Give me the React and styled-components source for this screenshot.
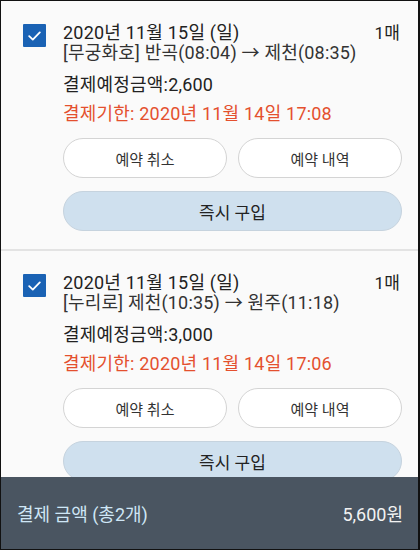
import styled, { createGlobalStyle } from "styled-components";

const GlobalStyle = createGlobalStyle`
  html, body {
    margin: 0;
    padding: 0;
    background: #fafafa;
  }
  body {
    font-family: Roboto, "Noto Sans CJK KR", sans-serif;
    color: #222;
  }
`;

const tickets = [
  {
    id: 1,
    date: "2020년 11월 15일 (일)",
    count: "1매",
    train: "무궁화호",
    from: "반곡(08:04)",
    to: "제천(08:35)",
    price: "2,600",
    deadline: "2020년 11월 14일 17:08",
  },
  {
    id: 2,
    date: "2020년 11월 15일 (일)",
    count: "1매",
    train: "누리로",
    from: "제천(10:35)",
    to: "원주(11:18)",
    price: "3,000",
    deadline: "2020년 11월 14일 17:06",
  },
];

const CheckIcon = () => (
  <svg width="13" height="10" viewBox="0 0 13 10">
    <path
      d="M1.2 5.2 L4.8 8.6 L11.8 1.4"
      fill="none"
      stroke="#fff"
      strokeWidth="1.8"
      strokeLinecap="round"
      strokeLinejoin="round"
    />
  </svg>
);

const TicketCard = ({ ticket }) => (
  <Card>
    <Check>
      <CheckIcon />
    </Check>
    <Body>
      <TitleRow>
        <span>{ticket.date}</span>
        <Count>{ticket.count}</Count>
      </TitleRow>
      <Route>
        [{ticket.train}] {ticket.from} → {ticket.to}
      </Route>
      <Price>결제예정금액:{ticket.price}</Price>
      <Deadline>결제기한: {ticket.deadline}</Deadline>
      <ButtonRow>
        <PillButton>예약 취소</PillButton>
        <PillButton>예약 내역</PillButton>
      </ButtonRow>
      <BuyButton>즉시 구입</BuyButton>
    </Body>
  </Card>
);

const App = () => (
  <Frame>
    <GlobalStyle />
    <List>
      {tickets.map((t) => (
        <TicketCard key={t.id} ticket={t} />
      ))}
    </List>
    <TotalBar>
      <TotalLabel>결제 금액 (총2개)</TotalLabel>
      <TotalAmount>5,600원</TotalAmount>
    </TotalBar>
  </Frame>
);

export default App;

const Frame = styled.div`
  position: relative;
  width: 420px;
  height: 550px;
  box-sizing: border-box;
  border: 1px solid #111;
  border-right-width: 2px;
  overflow: hidden;
  background: #fafafa;
`;

const List = styled.div`
  display: flex;
  flex-direction: column;
`;

const Card = styled.div`
  display: flex;
  gap: 17px;
  padding: 22px 16px 18px 22px;
  border-bottom: 2px solid #e3e3e3;
`;

const Check = styled.div`
  flex: none;
  display: flex;
  align-items: center;
  justify-content: center;
  width: 23px;
  height: 23px;
  margin-top: 1px;
  background: #1a62b4;
  border-radius: 1px;
`;

const Body = styled.div`
  flex: 1;
  display: flex;
  flex-direction: column;
  font-size: 18px;
  letter-spacing: 0.2px;
`;

const TitleRow = styled.div`
  display: flex;
  justify-content: space-between;
  line-height: 20px;
  padding-right: 2px;
`;

const Count = styled.span`
  font-size: 17px;
`;

const Route = styled.div`
  line-height: 20px;
  color: #333;
`;

const Price = styled.div`
  margin-top: 10px;
  line-height: 24px;
`;

const Deadline = styled.div`
  margin-top: 5px;
  line-height: 24px;
  color: #e4502e;
`;

const ButtonRow = styled.div`
  display: grid;
  grid-template-columns: 1fr 1fr;
  gap: 11px;
  margin-top: 12px;
`;

const PillButton = styled.button`
  height: 40px;
  border: 1px solid #d4d4d4;
  border-radius: 20px;
  background: #fff;
  color: #333;
  font-family: inherit;
  font-size: 15px;
  letter-spacing: 0;
`;

const BuyButton = styled.button`
  margin-top: 13px;
  height: 40px;
  border: 1px solid #c6d3de;
  border-radius: 20px;
  background: #cfe0ee;
  color: #222;
  font-family: inherit;
  font-size: 17px;
  letter-spacing: 0;
`;

const TotalBar = styled.div`
  position: absolute;
  left: 0;
  right: 0;
  bottom: 0;
  height: 72px;
  display: flex;
  align-items: center;
  justify-content: space-between;
  padding: 0 15px 0 16px;
  background: #4a5561;
  font-size: 18px;
`;

const TotalLabel = styled.span`
  color: #cfe6f5;
`;

const TotalAmount = styled.span`
  color: #f2f2f2;
`;
